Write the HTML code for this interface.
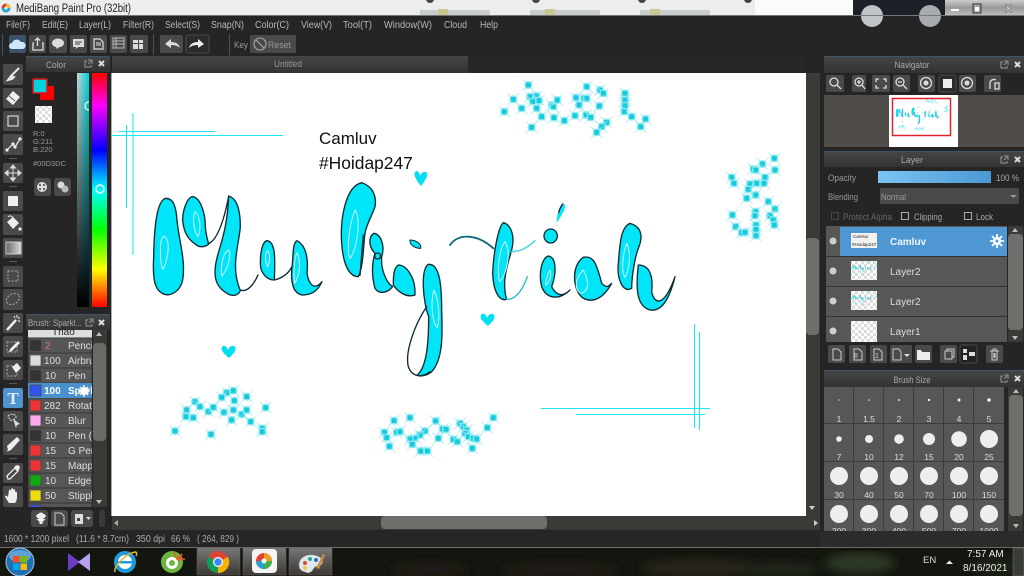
<!DOCTYPE html>
<html><head><meta charset="utf-8"><title>MediBang Paint Pro</title>
<style>html,body{margin:0;padding:0;background:#252525;overflow:hidden}svg{display:block;position:absolute;left:0;top:0}text{font-family:"Liberation Sans",sans-serif}</style></head>
<body>
<svg width="1024" height="576" viewBox="0 0 1024 576" xmlns="http://www.w3.org/2000/svg">
<defs>
<linearGradient id="hue" x1="0" y1="0" x2="0" y2="1"><stop offset="0" stop-color="#f00"/><stop offset=".14" stop-color="#f0f"/><stop offset=".33" stop-color="#00f"/><stop offset=".5" stop-color="#0ff"/><stop offset=".67" stop-color="#0f0"/><stop offset=".84" stop-color="#ff0"/><stop offset="1" stop-color="#f00"/></linearGradient>
<linearGradient id="sh" x1="0" y1="0" x2="1" y2="0"><stop offset="0" stop-color="#c8d8d8"/><stop offset="1" stop-color="#00d3dc"/></linearGradient>
<linearGradient id="sv" x1="0" y1="0" x2="0" y2="1"><stop offset="0" stop-color="#000" stop-opacity="0"/><stop offset="1" stop-color="#000"/></linearGradient>
<linearGradient id="hd" x1="0" y1="0" x2="0" y2="1"><stop offset="0" stop-color="#454545"/><stop offset="1" stop-color="#333"/></linearGradient>
<linearGradient id="op" x1="0" y1="0" x2="1" y2="0"><stop offset="0" stop-color="#7cc4f4"/><stop offset="1" stop-color="#4b98d2"/></linearGradient>
<linearGradient id="grd" x1="0" y1="0" x2="1" y2="0"><stop offset="0" stop-color="#666"/><stop offset="1" stop-color="#ddd"/></linearGradient>
<linearGradient id="win" x1="0" y1="0" x2="0" y2="1"><stop offset="0" stop-color="#ccc"/><stop offset=".5" stop-color="#999"/><stop offset="1" stop-color="#bbb"/></linearGradient>
<linearGradient id="tbtn" x1="0" y1="0" x2="0" y2="1"><stop offset="0" stop-color="#777"/><stop offset="1" stop-color="#3c3833"/></linearGradient>
<pattern id="chk" width="6" height="6" patternUnits="userSpaceOnUse"><rect width="6" height="6" fill="#fff"/><rect width="3" height="3" fill="#ddd"/><rect x="3" y="3" width="3" height="3" fill="#ddd"/></pattern>
<g id="s"><path d="M-21-21L-4 0-21 21 0 4 21 21 4 0 21-21 0-4Z" fill="#9feaf3"/><circle r="12" fill="#86e8f2"/><rect x="-7" y="-7" width="14" height="14" fill="#14cadb"/></g>
<filter id="bl"><feGaussianBlur stdDeviation="5"/></filter>
<filter id="sb"><feGaussianBlur stdDeviation=".35"/></filter>
</defs>

<!-- base -->
<rect width="1024" height="576" fill="#252525"/>

<!-- title bar -->
<rect width="1024" height="16" fill="#eceeee"/>
<g fill="#c8cccc"><rect x="420" y="10" width="70" height="5"/><rect x="530" y="10" width="70" height="5"/><rect x="640" y="10" width="70" height="5"/></g>
<g fill="#c9c690"><rect x="438" y="9" width="10" height="6"/><rect x="545" y="9" width="10" height="6"/><rect x="650" y="9" width="10" height="6"/><rect x="758" y="9" width="8" height="6"/></g>
<g fill="#444"><circle cx="430" cy="-1" r="4"/><circle cx="536" cy="-1" r="4"/><circle cx="642" cy="-1" r="4"/><circle cx="748" cy="-1" r="4"/></g>
<rect x="755" width="98" height="16" fill="#fbfbfb"/>
<rect x="853" width="92" height="16" fill="#1c2028"/>
<circle cx="872" cy="16" r="11" fill="#c0c4c8"/><circle cx="930" cy="16" r="11" fill="#a8acb0"/>
<rect x="945" width="79" height="15" fill="url(#win)"/>
<rect x="951" y="9" width="8" height="2" fill="#fff"/><rect x="973" y="4" width="8" height="9" fill="none" stroke="#333"/><rect x="975" y="7" width="4" height="4" fill="#fff"/>
<text x="1005" y="12" font-size="10" fill="#fff" stroke="#333" stroke-width=".4" font-weight="bold">X</text>
<rect y="15" width="1024" height="1" fill="#777"/>
<circle cx="6" cy="8" r="4.500" fill="#e33"/><path d="M6 3.500a4.500 4.500 0 0 1 4.500 4.500H6Z" fill="#e8c020"/><path d="M1.500 8a4.500 4.500 0 0 0 9 0H6Z" fill="#25a9d8"/><circle cx="6" cy="8" r="1.500" fill="#fff"/>
<text x="16" y="12" font-size="11.500" fill="#222" textLength="115" lengthAdjust="spacingAndGlyphs">MediBang Paint Pro (32bit)</text>

<!-- menu -->
<g font-size="10" fill="#b8b8b8">
<text x="6" y="28" textLength="24" lengthAdjust="spacingAndGlyphs">File(F)</text>
<text x="42" y="28" textLength="26" lengthAdjust="spacingAndGlyphs">Edit(E)</text>
<text x="79" y="28" textLength="32" lengthAdjust="spacingAndGlyphs">Layer(L)</text>
<text x="123" y="28" textLength="31" lengthAdjust="spacingAndGlyphs">Filter(R)</text>
<text x="165" y="28" textLength="35" lengthAdjust="spacingAndGlyphs">Select(S)</text>
<text x="211" y="28" textLength="33" lengthAdjust="spacingAndGlyphs">Snap(N)</text>
<text x="255" y="28" textLength="34" lengthAdjust="spacingAndGlyphs">Color(C)</text>
<text x="301" y="28" textLength="31" lengthAdjust="spacingAndGlyphs">View(V)</text>
<text x="343" y="28" textLength="29" lengthAdjust="spacingAndGlyphs">Tool(T)</text>
<text x="384" y="28" textLength="48" lengthAdjust="spacingAndGlyphs">Window(W)</text>
<text x="444" y="28" textLength="23" lengthAdjust="spacingAndGlyphs">Cloud</text>
<text x="480" y="28" textLength="18" lengthAdjust="spacingAndGlyphs">Help</text>
</g>

<!-- top toolbar -->
<g fill="#3e5468"><rect x="2" y="34" width="1" height="21"/><rect x="153" y="34" width="1" height="21"/><rect x="229" y="34" width="1" height="21"/></g>
<g fill="#4a4a4a"><rect x="9" y="35" width="17" height="18" rx="2" fill="#39536a"/><rect x="29" y="35" width="17" height="18" rx="2"/><rect x="49" y="35" width="18" height="18" rx="2"/><rect x="70" y="35" width="17" height="18" rx="2"/><rect x="90" y="35" width="17" height="18" rx="2"/><rect x="110" y="35" width="17" height="18" rx="2"/><rect x="130" y="35" width="18" height="18" rx="2"/><rect x="160" y="35" width="23" height="18" rx="2"/><rect x="186" y="35" width="23" height="18" rx="2" fill="#2c2c2c" stroke="#4a4a4a"/><rect x="250" y="35" width="46" height="18" rx="2"/></g>
<path d="M12 49a3 3 0 0 1 0-6 5 5 0 0 1 9-1 3.500 3.500 0 0 1 2 7Z" fill="#cfe6ff"/>
<path d="M34 43h-1v7h10v-7h-1M37.500 46v-8M35 40.500l2.500-2.500 2.500 2.500" fill="none" stroke="#ddd" stroke-width="1.300"/>
<ellipse cx="58" cy="43" rx="6" ry="4.500" fill="#ddd"/><path d="M56 47l3 0-2 2Z" fill="#ddd"/>
<path d="M73 39h11v8h-6l-2 2v-2h-3Z" fill="#ddd"/><path d="M75 42h7M75 44h5" stroke="#444"/>
<path d="M94 39h6l3 3v7h-9Z" fill="none" stroke="#ddd" stroke-width="1.200"/><path d="M96 43h5M96 45h5" stroke="#ddd"/>
<path d="M113 38h11v10h-11ZM113 41h11M113 44h11M116 38v10" fill="none" stroke="#bbb"/>
<path d="M133 40h5v3h-5ZM139 40h4v3h-4ZM133 44h5v5h-5ZM139 44h4v5h-4Z" fill="#ddd"/>
<path d="M165 44l6-5v3c5 0 8 2 9 6-2-2-5-3-9-3v3Z" fill="#ddd"/>
<path d="M204 44l-6-5v3c-5 0-8 2-9 6 2-2 5-3 9-3v3Z" fill="#f0f0f0"/>
<text x="234" y="48" font-size="9.500" fill="#999" textLength="14" lengthAdjust="spacingAndGlyphs">Key</text>
<circle cx="260" cy="44" r="6" fill="none" stroke="#aaa" stroke-width="1.100"/><path d="M256 40l8 8" stroke="#aaa" stroke-width="1.100"/>
<text x="268" y="48" font-size="9.500" fill="#999" textLength="23" lengthAdjust="spacingAndGlyphs">Reset</text>

<!-- left tools -->
<g fill="#4a4a4a">
<rect x="3" y="64" width="20" height="21" rx="2"/><rect x="3" y="88" width="20" height="20" rx="2"/><rect x="3" y="111" width="20" height="20" rx="2"/><rect x="3" y="134" width="20" height="21" rx="2"/><rect x="3" y="163" width="20" height="20" rx="2"/><rect x="3" y="191" width="20" height="20" rx="2"/><rect x="3" y="214" width="20" height="21" rx="2"/><rect x="3" y="238" width="20" height="20" rx="2"/><rect x="3" y="266" width="20" height="21" rx="2"/><rect x="3" y="289" width="20" height="21" rx="2"/><rect x="3" y="313" width="20" height="20" rx="2"/><rect x="3" y="336" width="20" height="21" rx="2"/><rect x="3" y="360" width="20" height="20" rx="2"/><rect x="3" y="388" width="20" height="20" rx="2" fill="#4f94cf"/><rect x="3" y="411" width="20" height="20" rx="2"/><rect x="3" y="434" width="20" height="21" rx="2"/><rect x="3" y="463" width="20" height="20" rx="2"/><rect x="3" y="486" width="20" height="21" rx="2"/>
</g>
<g fill="#5a5a5a"><rect x="9" y="158" width="8" height="1"/><rect x="9" y="186" width="8" height="1"/><rect x="9" y="261" width="8" height="1"/><rect x="9" y="383" width="8" height="1"/><rect x="9" y="458" width="8" height="1"/></g>
<path d="M19 68L11 76M11 76l-3 4 4-1 2-2Z" stroke="#e6e6e6" stroke-width="2" fill="#e6e6e6"/>
<path d="M13 91l7 6-7 8-7-6Z" fill="#eee"/><path d="M9 96l6 5" stroke="#555"/>
<rect x="8" y="116" width="10" height="10" fill="none" stroke="#ccc" stroke-width="1.300"/>
<path d="M7 150l6-6 2 3 5-8" fill="none" stroke="#eee" stroke-width="1.200"/><g fill="#eee"><circle cx="7" cy="150" r="1.600"/><circle cx="13" cy="144" r="1.600"/><circle cx="15" cy="147" r="1.600"/><circle cx="20" cy="139" r="1.600"/></g>
<path d="M13 165v16M5 173h16M13 165l-2.500 3h5ZM13 181l-2.500-3h5ZM5 173l3-2.500v5ZM21 173l-3-2.500v5Z" stroke="#ddd" fill="#ddd"/>
<rect x="8" y="196" width="10" height="10" fill="#eee"/>
<path d="M7 222l6-5 6 6-6 6Z" fill="#eee"/><path d="M8 217c2-2 4-1 5 1" stroke="#eee" fill="none"/><circle cx="20" cy="229" r="1.600" fill="#eee"/>
<rect x="6" y="242" width="15" height="12" fill="url(#grd)" stroke="#ccc"/>
<rect x="8" y="271" width="10" height="10" fill="none" stroke="#aaa" stroke-dasharray="2 1.500"/>
<ellipse cx="13" cy="299" rx="7" ry="5" fill="none" stroke="#aaa" stroke-dasharray="2 1.500" transform="rotate(-30 13 299)"/>
<path d="M7 330l9-10" stroke="#eee" stroke-width="2.500"/><path d="M17 315v3M20 318h-2M20 322l-2-2M14 316l1 2" stroke="#eee"/>
<rect x="7" y="342" width="10" height="10" fill="none" stroke="#aaa" stroke-dasharray="2 1.500"/><path d="M10 349l8-8 2 2-8 8-3 1Z" fill="#eee"/>
<rect x="7" y="366" width="10" height="10" fill="none" stroke="#aaa" stroke-dasharray="2 1.500"/><path d="M12 367l5-4 4 5-5 5Z" fill="#eee"/>
<text x="13" y="404" text-anchor="middle" font-size="17" font-weight="bold" fill="#e6eef5" style="font-family:'Liberation Serif',serif">T</text>
<path d="M8 416c3-3 8-2 8 1 0 2-4 4-6 3Z" fill="none" stroke="#ddd" stroke-dasharray="2 1"/><path d="M13 419l7 5-3 1-1 3Z" fill="#ddd"/>
<path d="M8 450l-1-4 10-9 3 3-9 10Z" fill="#eee"/><path d="M7 451l3-1" stroke="#eee"/>
<path d="M8 479l-1-3 8-8 3 3-8 8Z" fill="none" stroke="#eee" stroke-width="1.300"/><path d="M15 466l3-1 2 2-1 3-2 1-3-3Z" fill="#eee"/>
<path d="M9 503c-2-3-4-6-4-7 1-1 2 0 3 1l1-7c1-1 2 0 2 1v-2c1-1 2-1 2 0v1c1-1 2-1 2 0v2c1-1 2 0 2 1v4c0 3-1 5-2 6Z" fill="#eee"/>

<!-- color panel -->
<rect x="26" y="56" width="84" height="1" fill="#3e5468"/>
<rect x="26" y="57" width="84" height="15" fill="url(#hd)"/>
<text x="56" y="68" font-size="9.500" fill="#aaa" text-anchor="middle" textLength="20" lengthAdjust="spacingAndGlyphs">Color</text>
<path d="M87 61h-2v6h6v-2M88 60h4v4M88 64l3-3" fill="none" stroke="#999"/>
<path d="M99 61l5 5M104 61l-5 5" stroke="#ddd" stroke-width="2"/>
<rect x="40" y="86" width="14" height="14" fill="#f00"/>
<rect x="33" y="79" width="14" height="14" fill="#00d3dc" stroke="#e01010" stroke-width="1.500"/>
<rect x="35" y="106" width="17" height="17" fill="url(#chk)"/>
<g font-size="7.500" fill="#999"><text x="33" y="136">R:0</text><text x="33" y="144">G:211</text><text x="33" y="152">B:220</text><text x="33" y="166">#00D3DC</text></g>
<rect x="34" y="178" width="17" height="18" rx="3" fill="#4a4a4a"/><rect x="54" y="178" width="17" height="18" rx="3" fill="#4a4a4a"/>
<circle cx="42" cy="187" r="5" fill="#ddd"/><circle cx="40" cy="185" r="1" fill="#444"/><circle cx="44" cy="185" r="1" fill="#444"/><circle cx="40" cy="189" r="1" fill="#444"/><circle cx="44" cy="189" r="1" fill="#444"/>
<circle cx="61" cy="185" r="3.500" fill="#ddd"/><circle cx="65" cy="189" r="3.500" fill="#bbb"/>
<rect x="77" y="73" width="12" height="234" fill="url(#sh)"/><rect x="77" y="73" width="12" height="234" fill="url(#sv)"/>
<rect x="92" y="73" width="15" height="234" fill="url(#hue)"/>
<path d="M89 102a4 4 0 1 0 0 8" fill="none" stroke="#cfeef0" stroke-width="1.500"/>
<circle cx="100" cy="189" r="4" fill="none" stroke="#e8ffff" stroke-width="1.500"/>

<!-- brush panel -->
<rect x="26" y="314" width="84" height="1" fill="#3e5468"/>
<rect x="26" y="315" width="84" height="15" fill="url(#hd)"/>
<text x="28" y="326" font-size="9.500" fill="#aaa" textLength="54" lengthAdjust="spacingAndGlyphs">Brush: Sparkl...</text>
<path d="M88 320h-2v6h6v-2M89 319h4v4M89 323l3-3" fill="none" stroke="#999"/>
<path d="M99 320l5 5M104 320l-5 5" stroke="#ddd" stroke-width="2"/>
<svg x="28" y="330" width="64" height="177" viewBox="28 330 64 177">
<rect x="28" y="322" width="64" height="16" fill="#ddd"/><text x="52" y="335" font-size="10" fill="#222">Thao</text>
<g fill="#565656" stroke="#383838" stroke-width="1">
<rect x="28" y="338" width="64" height="15"/><rect x="28" y="353" width="64" height="15"/><rect x="28" y="368" width="64" height="15"/><rect x="28" y="398" width="64" height="15"/><rect x="28" y="413" width="64" height="15"/><rect x="28" y="428" width="64" height="15"/><rect x="28" y="443" width="64" height="15"/><rect x="28" y="458" width="64" height="15"/><rect x="28" y="473" width="64" height="15"/><rect x="28" y="488" width="64" height="15"/><rect x="28" y="503" width="64" height="15"/>
</g>
<rect x="28" y="383" width="64" height="15" fill="#4a90cc"/>
<g stroke="#444" stroke-width=".7">
<rect x="30" y="340" width="11" height="11" fill="#333"/><rect x="30" y="355" width="11" height="11" fill="#ddd"/><rect x="30" y="370" width="11" height="11" fill="#333"/><rect x="30" y="385" width="11" height="11" fill="#3355ee"/><rect x="30" y="400" width="11" height="11" fill="#ee3333"/><rect x="30" y="415" width="11" height="11" fill="#ffaaee"/><rect x="30" y="430" width="11" height="11" fill="#333"/><rect x="30" y="445" width="11" height="11" fill="#ee3333"/><rect x="30" y="460" width="11" height="11" fill="#ee3333"/><rect x="30" y="475" width="11" height="11" fill="#11aa11"/><rect x="30" y="490" width="11" height="11" fill="#eedd11"/><rect x="30" y="505" width="11" height="11" fill="#3355ee"/>
</g>
<g font-size="10" fill="#ddd">
<text x="45" y="349" fill="#e07070">2</text><text x="68" y="349">Pencil</text>
<text x="44" y="364">100</text><text x="68" y="364">Airbrush</text>
<text x="45" y="379">10</text><text x="68" y="379">Pen</text>
<text x="44" y="394" font-weight="bold" fill="#fff">100</text><text x="68" y="394" font-weight="bold" fill="#fff">Sparkle</text>
<text x="44" y="409">282</text><text x="68" y="409">Rotation</text>
<text x="45" y="424">50</text><text x="68" y="424">Blur</text>
<text x="45" y="439">10</text><text x="68" y="439">Pen (Sharp)</text>
<text x="45" y="454">15</text><text x="68" y="454">G Pen</text>
<text x="45" y="469">15</text><text x="68" y="469">Mapping</text>
<text x="45" y="484">10</text><text x="68" y="484">Edge</text>
<text x="45" y="499">50</text><text x="68" y="499">Stipple</text>
</g>
<circle cx="84" cy="391" r="4" fill="#fff"/><path d="M84 385v12M78 391h12M80 387l8 8M88 387l-8 8" stroke="#fff" stroke-width="1.300"/>
</svg>
<rect x="93" y="330" width="14" height="177" fill="#3a3a36"/>
<rect x="93" y="343" width="13" height="98" rx="4" fill="#6a6a66"/>
<path d="M99 332l-3 4h6Z" fill="#bbb"/><path d="M99 504l-3-4h6Z" fill="#bbb"/>
<g fill="#4a4a4a"><rect x="31" y="510" width="17" height="17" rx="3"/><rect x="51" y="510" width="17" height="17" rx="3"/><rect x="71" y="510" width="22" height="17" rx="3"/><rect x="99" y="510" width="6" height="17" rx="2" fill="#3a3a3a"/></g>
<path d="M39.500 522l-3-3h2v-1c-3 0-3-4 0-4 1-2 4-2 5 0 3 0 3 4 0 4v1h2l-3 3v2h-3Z" fill="#eee"/>
<path d="M55 513h6l3 3v9h-9Z" fill="none" stroke="#ccc"/>
<rect x="75" y="514" width="8" height="10" fill="#ddd"/><rect x="77" y="518" width="3" height="3" fill="#444"/><path d="M86 517h5l-2.500 3Z" fill="#ddd"/>

<!-- doc tab -->
<rect x="112" y="56" width="356" height="17" fill="url(#hd)"/>
<rect x="468" y="56" width="338" height="17" fill="#272727"/>
<text x="288" y="67" font-size="9.500" fill="#999" text-anchor="middle" textLength="28" lengthAdjust="spacingAndGlyphs">Untitled</text>

<!-- canvas -->
<rect x="112" y="73" width="694" height="443" fill="#fff"/>
<rect x="111" y="73" width="1" height="443" fill="#aaa"/>
<g stroke="#1fe6f0" stroke-width="1.100" fill="none">
<path d="M112 135.500H283M119 131.500H215M133 113V255M126.500 125V208"/>
<path d="M694.500 324V428M699.500 332V430M541 408.500H710M576 414.500H705"/>
</g>
<text x="319" y="144" font-size="17" fill="#111">Camluv</text>
<text x="319" y="169" font-size="17.400" fill="#111">#Hoidap247</text>

<g id="art">
<g filter="url(#sb)">
<g transform="translate(112 170) scale(.33333)" stroke-linejoin="round" stroke-linecap="round">
<g fill="#00e5f8" stroke="#0c2a30" stroke-width="4">
<path d="M160 85C185 85 192 110 195 150 200 210 222 270 212 330 205 365 175 380 155 372 125 360 122 320 125 260 126 200 130 95 160 85Z"/>
<path d="M240 80C265 80 280 130 280 170 282 195 288 215 290 222 280 232 262 232 255 226 230 210 215 190 212 150 212 120 225 85 240 80Z"/>
<path d="M350 78C375 85 385 120 385 170 380 230 355 290 385 362 378 378 360 380 345 370 320 355 305 335 310 290 315 240 345 200 350 78Z"/>
<path d="M465 212C490 215 490 260 487 330 465 330 445 310 445 280 445 250 450 215 465 212Z"/>
<path d="M555 212C580 225 590 260 585 310 590 340 605 365 630 335 615 370 590 375 570 375 545 370 535 340 540 290 545 260 540 220 555 212Z"/>
</g>
<g fill="none" stroke="#0c2a30" stroke-width="4">
<path d="M288 222C320 210 340 130 350 80"/>
<path d="M385 360C405 368 425 345 438 315"/>
<path d="M487 330C510 325 530 310 540 290"/>
</g>
<g fill="none" stroke="#cdf8ff" stroke-width="3">
<path d="M155 198C140 210 145 280 152 298 165 280 180 210 155 198Z"/>
<path d="M250 125C240 140 245 185 258 200 268 175 265 140 250 125Z"/>
<path d="M350 240C330 250 325 300 330 318 345 300 360 260 350 240Z"/>
<path d="M467 242C458 250 460 280 467 290 475 275 475 250 467 242Z"/>
<path d="M555 248C545 265 545 320 548 340 560 320 570 280 555 248Z"/>
</g>
</g>
<g transform="translate(330 170) scale(.33333)" stroke-linejoin="round" stroke-linecap="round">
<g fill="#00e5f8" stroke="#0c2a30" stroke-width="4">
<path d="M95 38C130 50 140 80 135 110 125 140 110 160 105 190 100 230 100 290 85 320 60 320 40 290 35 220 30 150 45 50 95 38Z"/>
<path d="M132 190C155 195 165 230 155 260 152 300 170 340 188 350 170 372 145 372 135 355 125 320 125 280 135 250 115 230 115 200 132 190Z"/>
<path d="M205 285C230 285 258 325 255 375 225 385 200 360 190 345 190 320 190 295 205 285Z"/>
<path d="M295 283C330 280 335 350 335 420 338 500 338 570 305 605 295 615 270 622 262 615 290 590 296 520 296 440 280 400 270 300 295 283Z"/>
<path d="M520 158C545 165 555 200 545 240 530 290 515 340 530 388 505 395 490 360 488 310 490 250 505 170 520 158Z"/>
<path d="M655 258C680 262 680 310 665 350 680 380 700 380 720 360 690 390 650 390 635 350 625 310 635 265 655 258Z"/>
<path d="M760 262C790 255 800 280 815 340 830 355 835 350 845 340 820 385 790 400 760 385 730 365 720 290 760 262Z"/>
<path d="M900 160C935 170 940 200 925 235 915 260 905 320 905 355 880 370 860 330 865 280 870 210 875 170 900 160Z"/>
<path d="M925 285C960 285 970 320 965 365 975 410 1005 405 1035 320 1015 400 990 425 960 420 925 410 915 370 925 285Z"/>
</g>
<g fill="none" stroke="#0c2a30" stroke-width="4">
<path d="M100 195L90 316"/>
<path d="M360 225C385 190 440 190 490 235" stroke="#0d6a78" stroke-width="5.500"/>
<path d="M290 410C250 470 225 550 235 590 245 620 275 625 300 605"/>
<path d="M545 245C570 245 590 235 615 212" stroke="#58d5e8" stroke-width="5"/>
<path d="M530 388C550 390 575 370 592 320" stroke="#28b8c8" stroke-width="4"/>
</g>
<circle cx="143" cy="258" r="9" fill="#00e5f8" stroke="#0c2a30" stroke-width="4"/>
<path d="M240 210C262 210 275 225 272 235 255 235 238 225 240 210Z" fill="#00e5f8" stroke="#0c2a30" stroke-width="3"/>
<ellipse cx="662" cy="198" rx="20" ry="21" fill="#00e5f8" stroke="#0c2a30" stroke-width="4"/>
<path d="M700 100C712 105 700 130 680 158 680 130 690 105 700 100Z" fill="#00e5f8"/><path d="M698 102C692 110 688 120 686 128" stroke="#0c2a30" stroke-width="4" fill="none"/>
<g fill="none" stroke="#cdf8ff" stroke-width="3">
<path d="M75 120C55 170 50 250 60 265 80 240 95 150 75 120Z"/>
<path d="M312 360C300 400 308 460 322 472 332 440 325 390 312 360Z"/>
<path d="M525 215C505 240 500 320 510 335 530 310 545 250 525 215Z"/>
<path d="M660 300C650 320 645 340 648 345 660 335 665 315 660 300Z"/>
<path d="M760 300C730 330 735 365 755 370 780 360 775 330 760 300Z"/>
<path d="M890 220C875 260 875 310 885 322 898 300 905 250 890 220Z"/>
</g>
</g>
<!-- hearts -->
<path d="M415 172C417 169 420 173 420 176 421 173 425 170 427 173 428 177 424 182 421 186 418 182 413 176 415 172Z" fill="#00e0f2"/>
<path d="M481 315C483 312 487 315 487 318 488 315 492 312 494 315 496 319 491 323 488 326 485 323 479 319 481 315Z" fill="#00e0f2"/>
<path d="M222 347C224 344 227 347 228 350 229 347 233 344 235 347 237 351 232 355 229 358 226 355 220 351 222 347Z" fill="#00e0f2"/>
</g>

<!-- sparkles -->
<g filter="url(#sb)">
<g transform="translate(490 70) scale(.33333)">
<use href="#s" x="115" y="45"/><use href="#s" x="70" y="88"/><use href="#s" x="43" y="125"/><use href="#s" x="95" y="115"/><use href="#s" x="120" y="80"/><use href="#s" x="140" y="78"/><use href="#s" x="128" y="95"/><use href="#s" x="147" y="92"/><use href="#s" x="140" y="115"/><use href="#s" x="125" y="172"/><use href="#s" x="155" y="140"/><use href="#s" x="192" y="143"/><use href="#s" x="185" y="105"/><use href="#s" x="190" y="110"/><use href="#s" x="202" y="90"/><use href="#s" x="223" y="152"/><use href="#s" x="255" y="137"/><use href="#s" x="258" y="83"/><use href="#s" x="282" y="85"/><use href="#s" x="290" y="85"/><use href="#s" x="267" y="105"/><use href="#s" x="290" y="50"/><use href="#s" x="330" y="60"/><use href="#s" x="340" y="70"/><use href="#s" x="328" y="108"/><use href="#s" x="288" y="135"/><use href="#s" x="302" y="142"/><use href="#s" x="350" y="157"/><use href="#s" x="335" y="170"/><use href="#s" x="320" y="187"/><use href="#s" x="405" y="70"/><use href="#s" x="405" y="90"/><use href="#s" x="405" y="107"/><use href="#s" x="403" y="125"/><use href="#s" x="425" y="140"/><use href="#s" x="467" y="147"/><use href="#s" x="452" y="170"/>
<use href="#s" x="853" y="265"/><use href="#s" x="855" y="300"/><use href="#s" x="817" y="282"/><use href="#s" x="790" y="297"/><use href="#s" x="797" y="300"/><use href="#s" x="725" y="322"/><use href="#s" x="732" y="340"/><use href="#s" x="825" y="322"/><use href="#s" x="822" y="340"/><use href="#s" x="800" y="340"/><use href="#s" x="780" y="342"/><use href="#s" x="775" y="358"/><use href="#s" x="770" y="385"/><use href="#s" x="797" y="375"/><use href="#s" x="835" y="395"/><use href="#s" x="855" y="417"/><use href="#s" x="797" y="425"/><use href="#s" x="795" y="437"/><use href="#s" x="840" y="437"/><use href="#s" x="850" y="450"/><use href="#s" x="853" y="465"/><use href="#s" x="727" y="435"/><use href="#s" x="737" y="470"/><use href="#s" x="755" y="488"/><use href="#s" x="765" y="487"/><use href="#s" x="798" y="465"/><use href="#s" x="798" y="478"/><use href="#s" x="798" y="497"/>
</g>
<g transform="translate(370 315) scale(.33333)">
<use href="#s" x="72" y="317"/><use href="#s" x="120" y="308"/><use href="#s" x="197" y="318"/><use href="#s" x="370" y="308"/><use href="#s" x="352" y="338"/><use href="#s" x="43" y="352"/><use href="#s" x="50" y="368"/><use href="#s" x="58" y="394"/><use href="#s" x="80" y="352"/><use href="#s" x="90" y="350"/><use href="#s" x="165" y="348"/><use href="#s" x="150" y="360"/><use href="#s" x="135" y="370"/><use href="#s" x="120" y="372"/><use href="#s" x="127" y="388"/><use href="#s" x="205" y="370"/><use href="#s" x="218" y="342"/><use href="#s" x="228" y="343"/><use href="#s" x="250" y="373"/><use href="#s" x="262" y="380"/><use href="#s" x="270" y="325"/><use href="#s" x="280" y="335"/><use href="#s" x="290" y="345"/><use href="#s" x="285" y="355"/><use href="#s" x="295" y="365"/><use href="#s" x="310" y="370"/><use href="#s" x="320" y="372"/><use href="#s" x="307" y="400"/><use href="#s" x="152" y="408"/><use href="#s" x="172" y="408"/>
</g>
<g transform="translate(0 380) scale(.33333)">
<use href="#s" x="525" y="153"/><use href="#s" x="633" y="163"/><use href="#s" x="560" y="90"/><use href="#s" x="558" y="110"/><use href="#s" x="580" y="113"/><use href="#s" x="585" y="65"/><use href="#s" x="600" y="80"/><use href="#s" x="625" y="95"/><use href="#s" x="640" y="82"/><use href="#s" x="672" y="97"/><use href="#s" x="700" y="90"/><use href="#s" x="695" y="120"/><use href="#s" x="725" y="103"/><use href="#s" x="740" y="90"/><use href="#s" x="752" y="125"/><use href="#s" x="797" y="83"/><use href="#s" x="787" y="145"/><use href="#s" x="787" y="155"/><use href="#s" x="703" y="62"/><use href="#s" x="700" y="32"/><use href="#s" x="680" y="38"/><use href="#s" x="665" y="52"/><use href="#s" x="740" y="50"/>
</g>
</g>
</g>

<!-- canvas scrollbars -->
<rect x="806" y="73" width="14" height="457" fill="#3a3a36"/>
<rect x="806" y="238" width="13" height="97" rx="4" fill="#6e6e6a"/>
<path d="M812 510l-3-4h6Z" fill="#ccc"/>
<rect x="112" y="516" width="708" height="14" fill="#3a3a36"/>
<rect x="381" y="516" width="166" height="13" rx="4" fill="#6e6e6a"/>
<path d="M114 523l4-3v6Z" fill="#aaa"/><path d="M818 523l-4-3v6Z" fill="#ccc"/>

<!-- navigator -->
<rect x="824" y="56" width="200" height="1" fill="#3e5468"/>
<rect x="824" y="57" width="200" height="16" fill="url(#hd)"/>
<text x="912" y="68" font-size="9.500" fill="#aaa" text-anchor="middle" textLength="35" lengthAdjust="spacingAndGlyphs">Navigator</text>
<path d="M1003 62h-2v6h6v-2M1004 61h4v4M1004 65l3-3" fill="none" stroke="#999"/><path d="M1015 62l5 5M1020 62l-5 5" stroke="#ddd" stroke-width="2"/>
<g fill="#4a4a4a"><rect x="826" y="75" width="18" height="17" rx="2"/><rect x="852" y="75" width="14" height="17" rx="2"/><rect x="872" y="75" width="18" height="17" rx="2"/><rect x="893" y="75" width="17" height="17" rx="2"/><rect x="918" y="75" width="17" height="17" rx="2"/><rect x="939" y="75" width="17" height="17" rx="2" fill="#2c2c2c" stroke="#4a4a4a"/><rect x="959" y="75" width="17" height="17" rx="2"/><rect x="984" y="75" width="17" height="17" rx="2"/></g>
<g fill="none" stroke="#ddd" stroke-width="1.300">
<circle cx="834" cy="82" r="4"/><path d="M837 85l4 4"/>
<circle cx="859" cy="82" r="4"/><path d="M862 85l3 4M857 82h4M859 80v4"/>
<path d="M876 82v-3h3M886 82v-3h-3M876 85v3h3M886 85v3h-3"/>
<circle cx="900" cy="82" r="4"/><path d="M903 85l4 4M898 82h4"/>
<circle cx="926" cy="83" r="5.500"/><circle cx="967" cy="83" r="5.500"/>
<path d="M990 89v-6a4 4 0 0 1 6-3"/><rect x="995" y="83" width="4" height="6"/>
</g>
<rect x="943" y="79" width="9" height="9" fill="#eee"/><circle cx="926" cy="83" r="2.500" fill="#ddd"/><circle cx="967" cy="83" r="2.500" fill="#ddd"/>
<rect x="824" y="95" width="200" height="52" fill="#4f4c49"/>
<rect x="889" y="95" width="69" height="52" fill="#fff"/>
<g transform="translate(892.500 98.500) scale(.0836) translate(-112 -73)"><use href="#art"/></g>
<rect x="892.500" y="98.500" width="58" height="37" fill="none" stroke="#e0202a" stroke-width="1.500"/>

<!-- layer panel -->
<rect x="824" y="151" width="200" height="1" fill="#3e5468"/>
<rect x="824" y="152" width="200" height="15" fill="url(#hd)"/>
<text x="912" y="163" font-size="9.500" fill="#aaa" text-anchor="middle" textLength="22" lengthAdjust="spacingAndGlyphs">Layer</text>
<path d="M1003 157h-2v6h6v-2M1004 156h4v4M1004 160l3-3" fill="none" stroke="#999"/><path d="M1015 157l5 5M1020 157l-5 5" stroke="#ddd" stroke-width="2"/>
<text x="828" y="181" font-size="9.500" fill="#999" textLength="28" lengthAdjust="spacingAndGlyphs">Opacity</text>
<rect x="878" y="171" width="113" height="12" fill="url(#op)"/>
<text x="996" y="181" font-size="9.500" fill="#aaa" textLength="23" lengthAdjust="spacingAndGlyphs">100 %</text>
<text x="828" y="200" font-size="9.500" fill="#999" textLength="30" lengthAdjust="spacingAndGlyphs">Blending</text>
<rect x="880" y="188" width="139" height="16" rx="2" fill="#4a4a4a"/>
<text x="881" y="200" font-size="9.500" fill="#999" textLength="25" lengthAdjust="spacingAndGlyphs">Normal</text>
<path d="M1010 195h7l-3.500 3Z" fill="#999"/>
<rect x="831.500" y="212.500" width="7" height="7" fill="none" stroke="#4a4a4a"/>
<text x="843" y="220" font-size="9.500" fill="#666" textLength="49" lengthAdjust="spacingAndGlyphs">Protect Alpha</text>
<rect x="901.500" y="212.500" width="7" height="7" fill="none" stroke="#aaa"/>
<text x="914" y="220" font-size="9.500" fill="#aaa" textLength="28" lengthAdjust="spacingAndGlyphs">Clipping</text>
<rect x="964.500" y="212.500" width="7" height="7" fill="none" stroke="#aaa"/>
<text x="976" y="220" font-size="9.500" fill="#aaa" textLength="17" lengthAdjust="spacingAndGlyphs">Lock</text>
<rect x="826" y="226" width="181" height="116" fill="#575757"/>
<rect x="840" y="227" width="167" height="29" fill="#4f97d3"/>
<g fill="#333"><rect x="826" y="256" width="181" height="1"/><rect x="826" y="286" width="181" height="1"/><rect x="826" y="316" width="181" height="1"/></g>
<g fill="#cfcfcf"><circle cx="833" cy="241" r="3.500"/><circle cx="833" cy="271" r="3.500"/><circle cx="833" cy="301" r="3.500"/><circle cx="833" cy="331" r="3.500"/></g>
<rect x="851" y="233" width="26" height="15" fill="#f2f2f2"/><g fill="#222" font-size="4.500"><text x="853" y="238">Camluv</text><text x="852" y="246">#Hoidap247</text></g>
<rect x="851" y="261" width="26" height="19" fill="url(#chk)"/><rect x="851" y="291" width="26" height="19" fill="url(#chk)"/><rect x="851" y="321" width="26" height="21" fill="url(#chk)"/>
<g transform="translate(851 261) scale(.0375) translate(-112 -73)"><use href="#art"/></g>
<g transform="translate(851 291) scale(.0375) translate(-112 -73)"><use href="#art"/></g>
<text x="890" y="245" font-size="10" fill="#eef6ff" font-weight="bold">Camluv</text>
<text x="890" y="275" font-size="10" fill="#ddd">Layer2</text><text x="890" y="305" font-size="10" fill="#ddd">Layer2</text><text x="890" y="335" font-size="10" fill="#ddd">Layer1</text>
<circle cx="997" cy="241" r="4" fill="#fff"/><path d="M997 234v14M990 241h14M992 236l10 10M1002 236l-10 10" stroke="#fff" stroke-width="1.800"/><circle cx="997" cy="241" r="1.500" fill="#4f97d3"/>
<rect x="1008" y="226" width="15" height="116" fill="#3a3a36"/><rect x="1008" y="234" width="15" height="96" rx="4" fill="#6e6e6a"/>
<path d="M1015 228l-3 4h6Z" fill="#bbb"/><path d="M1015 340l-3-4h6Z" fill="#bbb"/>
<g fill="#4a4a4a"><rect x="828" y="345" width="17" height="18" rx="2"/><rect x="849" y="345" width="17" height="18" rx="2"/><rect x="870" y="345" width="17" height="18" rx="2"/><rect x="890" y="345" width="22" height="18" rx="2"/><rect x="915" y="345" width="17" height="18" rx="2"/><rect x="940" y="345" width="17" height="18" rx="2"/><rect x="960" y="345" width="17" height="18" rx="2" fill="#222" stroke="#4a4a4a"/><rect x="986" y="345" width="17" height="18" rx="2"/></g>
<g fill="none" stroke="#ccc"><path d="M833 349h5l3 3v8h-8Z"/><path d="M854 349h5l3 3v8h-8Z"/><path d="M874 349h5l3 3v8h-8Z"/><path d="M893 349h6l2 3v8h-8Z"/><rect x="945" y="351" width="7" height="8"/><path d="M947 351v-2h7v8h-2"/><path d="M990 351h9M992 351v9h5v-9M994 353v5M995 353v5M993 351v-2h3v2"/></g>
<text x="854" y="358" font-size="7" fill="#ccc">8</text><text x="875" y="358" font-size="7" fill="#ccc">1</text>
<path d="M904 354h6l-3 3Z" fill="#ddd"/>
<path d="M917 350h4l1 2h8v8h-13Z" fill="#eee"/>
<g fill="#ddd"><rect x="963" y="349" width="4" height="4"/><rect x="963" y="355" width="4" height="5"/><rect x="969" y="352" width="6" height="4"/></g>

<!-- brush size panel -->
<rect x="824" y="370" width="200" height="1" fill="#3e5468"/>
<rect x="824" y="371" width="200" height="16" fill="url(#hd)"/>
<text x="912" y="383" font-size="9.500" fill="#aaa" text-anchor="middle" textLength="37" lengthAdjust="spacingAndGlyphs">Brush Size</text>
<path d="M1003 376h-2v6h6v-2M1004 375h4v4M1004 379l3-3" fill="none" stroke="#999"/><path d="M1015 376l5 5M1020 376l-5 5" stroke="#ddd" stroke-width="2"/>
<rect x="824" y="387" width="180" height="144" fill="#575757"/>
<g fill="#3c3c3c"><rect x="853" y="387" width="1" height="144"/><rect x="883" y="387" width="1" height="144"/><rect x="913" y="387" width="1" height="144"/><rect x="943" y="387" width="1" height="144"/><rect x="973" y="387" width="1" height="144"/><rect x="824" y="423" width="180" height="1"/><rect x="824" y="461" width="180" height="1"/><rect x="824" y="499" width="180" height="1"/></g>
<g fill="#eee">
<circle cx="839" cy="400" r=".6"/><circle cx="869" cy="400" r=".8"/><circle cx="899" cy="400" r="1"/><circle cx="929" cy="400" r="1.200"/><circle cx="959" cy="400" r="1.500"/><circle cx="989" cy="400" r="1.800"/>
<circle cx="839" cy="439" r="2.800"/><circle cx="869" cy="439" r="4"/><circle cx="899" cy="439" r="4.800"/><circle cx="929" cy="439" r="6"/><circle cx="959" cy="439" r="7.800"/><circle cx="989" cy="439" r="9"/>
<circle cx="839" cy="476" r="9"/><circle cx="869" cy="476" r="9"/><circle cx="899" cy="476" r="9"/><circle cx="929" cy="476" r="9"/><circle cx="959" cy="476" r="9"/><circle cx="989" cy="476" r="9"/>
<circle cx="839" cy="514" r="9"/><circle cx="869" cy="514" r="9"/><circle cx="899" cy="514" r="9"/><circle cx="929" cy="514" r="9"/><circle cx="959" cy="514" r="9"/><circle cx="989" cy="514" r="9"/>
</g>
<g font-size="8.500" fill="#ddd" text-anchor="middle">
<text x="839" y="422">1</text><text x="869" y="422">1.5</text><text x="899" y="422">2</text><text x="929" y="422">3</text><text x="959" y="422">4</text><text x="989" y="422">5</text>
<text x="839" y="460">7</text><text x="869" y="460">10</text><text x="899" y="460">12</text><text x="929" y="460">15</text><text x="959" y="460">20</text><text x="989" y="460">25</text>
<text x="839" y="498">30</text><text x="869" y="498">40</text><text x="899" y="498">50</text><text x="929" y="498">70</text><text x="959" y="498">100</text><text x="989" y="498">150</text>
<text x="839" y="534">200</text><text x="869" y="534">300</text><text x="899" y="534">400</text><text x="929" y="534">500</text><text x="959" y="534">700</text><text x="989" y="534">1000</text>
</g>
<rect x="820" y="531" width="204" height="16" fill="#2b2b2b"/>
<rect x="1008" y="387" width="15" height="144" fill="#3a3a36"/><rect x="1009" y="395" width="14" height="121" rx="4" fill="#6e6e6a"/>
<path d="M1016 389l-3 4h6Z" fill="#bbb"/><path d="M1016 528l-3-4h6Z" fill="#bbb"/>

<!-- status -->
<rect y="530" width="820" height="17" fill="#262626"/>
<g font-size="10" fill="#aaa">
<text x="4" y="542" textLength="65" lengthAdjust="spacingAndGlyphs">1600 * 1200 pixel</text>
<text x="76" y="542" textLength="53" lengthAdjust="spacingAndGlyphs">(11.6 * 8.7cm)</text>
<text x="136" y="542" textLength="29" lengthAdjust="spacingAndGlyphs">350 dpi</text>
<text x="171" y="542" textLength="19" lengthAdjust="spacingAndGlyphs">66 %</text>
<text x="197" y="542" textLength="42" lengthAdjust="spacingAndGlyphs">( 264, 829 )</text>
</g>

<!-- taskbar -->
<rect y="547" width="1024" height="29" fill="#13150f"/>
<svg x="0" y="547" width="1024" height="29" viewBox="0 547 1024 29">
<g filter="url(#bl)">
<ellipse cx="700" cy="568" rx="60" ry="8" fill="#2a281a"/><ellipse cx="860" cy="563" rx="35" ry="10" fill="#2f3a26"/><ellipse cx="780" cy="570" rx="40" ry="7" fill="#20281a"/><ellipse cx="560" cy="570" rx="60" ry="7" fill="#201f15"/><ellipse cx="430" cy="570" rx="40" ry="7" fill="#221d14"/><ellipse cx="1000" cy="566" rx="30" ry="9" fill="#1a2115"/>
</g>
</svg>
<rect y="547" width="1024" height="1" fill="#6b6b66"/>
<g stroke="#666" stroke-width=".5"><rect x="197" y="548" width="43" height="27" fill="url(#tbtn)"/><rect x="243" y="548" width="43" height="27" fill="url(#tbtn)"/><rect x="289" y="548" width="43" height="27" fill="url(#tbtn)"/></g>
<!-- start -->
<circle cx="20" cy="562" r="14" fill="#1f6fb5" stroke="#a8c8e0"/>
<ellipse cx="20" cy="556" rx="11" ry="6" fill="#8cc4ea" opacity=".6"/>
<rect x="13" y="556" width="6.500" height="6.500" fill="#f25022"/><rect x="20.500" y="556" width="6.500" height="6.500" fill="#7fba00"/><rect x="13" y="563.500" width="6.500" height="6.500" fill="#00a4ef"/><rect x="20.500" y="563.500" width="6.500" height="6.500" fill="#ffb900"/>
<!-- VS -->
<path d="M68 553l12 9-12 9Z" fill="#6a3dc4"/><path d="M90 553L78 562l12 9Z" fill="#b9a0ee"/>
<!-- IE -->
<circle cx="125" cy="562" r="9" fill="#fff"/><circle cx="125" cy="562" r="9" fill="none" stroke="#1d9bdc" stroke-width="4"/><rect x="118" y="561" width="14" height="2.500" fill="#1d9bdc"/><path d="M115 572c-2-5 10-18 20-20 2 0 2 2 1 4" fill="none" stroke="#e8b820" stroke-width="1.500"/>
<!-- coccoc -->
<circle cx="172" cy="562" r="11" fill="#6eb43f"/><circle cx="172" cy="563" r="6" fill="#fff"/><circle cx="172" cy="563" r="3" fill="#6eb43f"/><path d="M174 552l3 7 5-5-3 6 6-1" fill="none" stroke="#e85a20" stroke-width="1.500"/>
<!-- chrome -->
<circle cx="218" cy="562" r="11" fill="#db4437"/><path d="M218 562L208.500 556.500A11 11 0 0 0 218 573L224 562Z" fill="#0f9d58"/><path d="M218 562l10-5a11 11 0 0 1-10 16Z" fill="#f4b400"/><circle cx="218" cy="562" r="5" fill="#fff"/><circle cx="218" cy="562" r="3.800" fill="#4285f4"/>
<!-- medibang -->
<rect x="252" y="549" width="25" height="24" rx="4" fill="#f4f4f4"/>
<circle cx="264" cy="561" r="8" fill="#e8402f"/><path d="M264 553a8 8 0 0 1 8 8h-8Z" fill="#e8a020"/><path d="M264 561h8a8 8 0 0 1-8 8Z" fill="#40b050"/><path d="M256 561a8 8 0 0 0 8 8v-8Z" fill="#25a0d0"/><circle cx="264" cy="561" r="2.500" fill="#fff"/>
<!-- paint -->
<path d="M299 565c0-8 8-11 15-10 6 1 10 5 8 9-2 3-6 1-8 4-2 4-5 6-9 4-4-1-6-3-6-7Z" fill="#dfe8ee" stroke="#889" stroke-width=".5"/>
<circle cx="305" cy="563" r="2" fill="#d43"/><circle cx="310" cy="559" r="2" fill="#2a8"/><circle cx="316" cy="560" r="2" fill="#36c"/><circle cx="305" cy="568" r="2" fill="#ec3"/><path d="M316 568l7-14 2 1-6 14Z" fill="#c89040"/>
<!-- tray -->
<text x="923" y="563" font-size="9.500" fill="#ddd">EN</text>
<path d="M946 564h7l-3.500-3.500Z" fill="#eee"/>
<text x="967" y="557" font-size="10" fill="#eee">7:57 AM</text>
<text x="963" y="571" font-size="10" fill="#eee">8/16/2021</text>
<rect x="1013" y="548" width="11" height="28" fill="#3a3d36" stroke="#777" stroke-width=".5"/>
</svg>
</body></html>
